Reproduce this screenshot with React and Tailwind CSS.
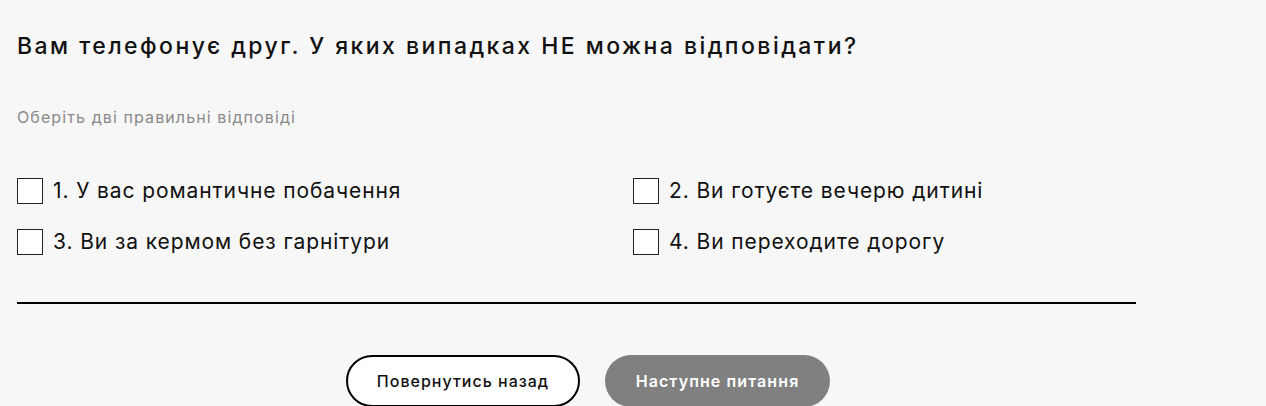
import React, { useState } from 'react';

const options = [
  '1. У вас романтичне побачення',
  '2. Ви готуєте вечерю дитині',
  '3. Ви за кермом без гарнітури',
  '4. Ви переходите дорогу',
];

const App = () => {
  const [checked, setChecked] = useState([]);

  const toggle = (i) => {
    setChecked((prev) => (prev.includes(i) ? prev.filter((x) => x !== i) : [...prev, i]));
  };

  return (
    <div className="min-h-[406px] bg-[#f7f7f7] font-['Inter',sans-serif] text-[#111]">
      <div className="pl-[17px] pt-[30px]">
        <h1 className="text-[23px] leading-[32px] font-medium tracking-[2.45px]">
          Вам телефонує друг. У яких випадках НЕ можна відповідати?
        </h1>
        <p className="mt-[45px] text-[16px] leading-[20px] tracking-[1.1px] text-[#8a8a8a]">
          Оберіть дві правильні відповіді
        </p>

        <div className="mt-[51px] grid grid-cols-[616px_1fr] gap-y-[25px]">
          {options.map((text, i) => (
            <label key={i} className="flex items-center gap-[10px] cursor-pointer">
              <button
                type="button"
                onClick={() => toggle(i)}
                className="w-[26px] h-[26px] border border-[#222] bg-white flex items-center justify-center"
              >
                {checked.includes(i) && <span className="w-[14px] h-[14px] bg-[#222]" />}
              </button>
              <span className="text-[21px] leading-[26px] tracking-[0.9px]">{text}</span>
            </label>
          ))}
        </div>

        <div className="mt-[47px] h-[2px] w-[1119px] bg-black" />

        <div className="mt-[51px] w-[1142px] flex justify-center gap-[25px]">
          <button className="h-[52px] w-[234px] rounded-full border-2 border-black bg-white text-[16px] font-medium tracking-[1px]">
            Повернутись назад
          </button>
          <button className="h-[52px] w-[225px] rounded-full bg-[#808080] text-white text-[16px] font-semibold tracking-[1.1px]">
            Наступне питання
          </button>
        </div>
      </div>
    </div>
  );
};

export default App;
